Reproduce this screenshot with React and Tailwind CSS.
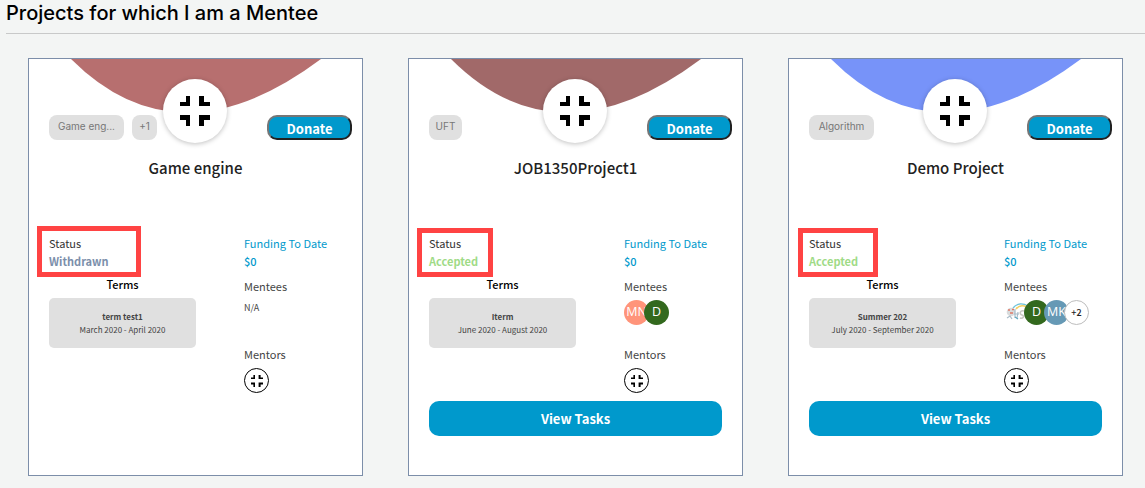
const projects = [
  {
    name: "Game engine",
    tags: [{ label: "Game eng...", width: "w-[75px]" }, { label: "+1", width: "w-[25px]" }],
    color: "#b76f6f",
    status: "Withdrawn",
    statusColor: "text-[#7c8fab]",
    term: "term test1",
    dates: "March 2020 - April 2020",
    mentees: [],
    tasks: false,
    outline: "left-[8px] top-[167px] h-[51px] w-[104px]",
  },
  {
    name: "JOB1350Project1",
    tags: [{ label: "UFT", width: "w-[33px]" }],
    color: "#a16969",
    status: "Accepted",
    statusColor: "text-[#9fdb87]",
    term: "Iterm",
    dates: "June 2020 - August 2020",
    mentees: ["MN", "D"],
    tasks: true,
    outline: "left-[8px] top-[169px] h-[49px] w-[76px]",
  },
  {
    name: "Demo Project",
    tags: [{ label: "Algorithm", width: "w-[65px]" }],
    color: "#7793f9",
    status: "Accepted",
    statusColor: "text-[#9fdb87]",
    term: "Summer 202",
    dates: "July 2020 - September 2020",
    mentees: ["photo", "D", "MK", "+2"],
    tasks: true,
    outline: "left-[9px] top-[169px] h-[49px] w-[80px]",
  },
];

const avatarStyles = {
  MN: "bg-[#ff947a] text-white",
  D: "bg-[#33691e] text-white",
  MK: "bg-[#6699b5] text-white",
};

function Corners({ className }) {
  return (
    <svg className={className} viewBox="0 0 30 30" fill="#000">
      <path d="M6 0h4v10H0V6h6z" />
      <path d="M19 0h5v6h6v4H19z" />
      <path d="M0 19h10v11H6v-6H0z" />
      <path d="M19 19h11v5h-6v6h-5z" />
    </svg>
  );
}

function PhotoAvatar() {
  return (
    <svg className="h-[25px] w-[25px] shrink-0" viewBox="0 0 25 25" fill="none">
      <path d="M9 8C13 3 19 3 24 6" stroke="#6fc4dc" strokeWidth="1.4" />
      <path d="M12 9c3-4 7-4 11-2" stroke="#f3cf62" strokeWidth="1.4" />
      <circle cx="7" cy="12" r="4.3" fill="#d9dcdd" />
      <path d="M4 10h2M8 9.500h2M6 13h3" stroke="#df7867" strokeWidth="1.3" />
      <path d="M3 18l3-2 2 3M11 9v9M14 12l-1 6M10 14h5" stroke="#a9bcc8" strokeWidth="1.2" />
      <path d="M20 11c-4-1-5 3-2 4s1 4-2 3" stroke="#c9c9c2" strokeWidth="1.6" />
      <path d="M11 17l3 2" stroke="#5ba7c0" strokeWidth="1.2" />
    </svg>
  );
}

function Avatar({ label }) {
  if (label === "photo") return <PhotoAvatar />;
  if (label.startsWith("+"))
    return (
      <span className="flex h-[25px] w-[25px] shrink-0 items-center justify-center rounded-full border border-[#bdbdbd] bg-white text-[9px] font-medium text-[#222]">
        {label}
      </span>
    );
  return (
    <span
      className={`flex h-[25px] w-[25px] shrink-0 items-center justify-center overflow-hidden rounded-full font-['Open_Sans',sans-serif] text-[12.5px] ${avatarStyles[label]}`}
    >
      {label}
    </span>
  );
}

function ProjectCard({ project }) {
  return (
    <article className="relative h-[418px] w-[335px] shrink-0 border border-[#7c8ea9] bg-white">
      <svg className="absolute left-0 top-0 h-[60px] w-[333px]" viewBox="0 0 333 60">
        <path d="M42 0Q149 107 292 0Z" fill={project.color} />
      </svg>

      <div className="relative flex h-[84px] items-end pl-5 pr-[10px]">
        <div className="mb-[3px] flex w-[114px] gap-2">
          {project.tags.map((tag) => (
            <span
              key={tag.label}
              className={`flex h-[25px] items-center justify-center whitespace-nowrap rounded-lg bg-[#e0e0e0] pb-[2px] font-[Inter,sans-serif] text-[10px] text-[#777] ${tag.width}`}
            >
              {tag.label}
            </span>
          ))}
        </div>
        <div className="flex h-16 w-16 items-center justify-center rounded-full bg-white shadow-[0_1px_5px_rgba(0,0,0,0.25)]">
          <Corners className="h-[30px] w-[30px]" />
        </div>
        <button className="mb-[3px] ml-auto flex h-[25px] w-[85px] items-center justify-center rounded-[10px] border-2 border-b-[#212121] border-l-[#767676] border-r-[#212121] border-t-[#767676] bg-[#0099cc] pt-[2px] text-[13px] font-bold leading-none text-white">
          Donate
        </button>
      </div>

      <h2 className="mt-[14px] text-center text-[15px] font-medium leading-[22px] text-[#222]">{project.name}</h2>

      <div className="mt-[55px] flex h-[167px] pl-5">
        <div className="w-[147px]">
          <div className="h-[18px] text-[11px] leading-[18px] text-[#333]">Status</div>
          <div className={`h-[18px] text-[11px] font-bold leading-[18px] ${project.statusColor}`}>{project.status}</div>
          <div className="mt-[5px] h-[18px] text-center text-[11px] font-medium leading-[18px] text-black">Terms</div>
          <div className="mt-[5px] flex h-[50px] flex-col items-center rounded-[5px] bg-[#e0e0e0] pt-3 text-[8px] leading-[13px] text-[#444]">
            <div className="font-bold">{project.term}</div>
            <div>{project.dates}</div>
          </div>
        </div>
        <div className="ml-12">
          <div className="h-[18px] text-[11px] leading-[18px] text-[#0099cc]">Funding To Date</div>
          <div className="h-[18px] text-[11px] font-medium leading-[18px] text-[#0099cc]">$0</div>
          <div className="mt-[7px] h-[18px] text-[11px] leading-[18px] text-[#444]">Mentees</div>
          <div className="mt-[5px] flex h-[25px] -space-x-[5px]">
            {project.mentees.length === 0 && <span className="text-[9px] leading-4 text-[#444]">N/A</span>}
            {project.mentees.map((label) => (
              <Avatar key={label} label={label} />
            ))}
          </div>
          <div className="mt-5 h-[18px] text-[11px] leading-[18px] text-[#444]">Mentors</div>
          <div className="mt-[5px] flex h-[25px] w-[25px] items-center justify-center rounded-full border border-black">
            <Corners className="h-3 w-3" />
          </div>
        </div>
      </div>

      {project.tasks && (
        <button className="ml-5 flex h-[35px] w-[293px] items-center justify-center rounded-[10px] bg-[#0099cc] text-[13px] font-bold leading-none text-white">
          View Tasks
        </button>
      )}

      <div className={`absolute border-[5px] border-[#ff4343] ${project.outline}`} />
    </article>
  );
}

export default function App() {
  return (
    <main className="h-[488px] w-[1145px] overflow-hidden bg-[#f3f5f4] font-['Noto_Sans_CJK_SC','Noto_Sans',sans-serif]">
      <h1 className="ml-[6px] h-[34px] border-b border-[#c8c9c9] font-[Inter,sans-serif] text-[20px] font-medium leading-[26px] text-black">
        Projects for which I am a Mentee
      </h1>
      <section className="flex gap-[45px] pl-7 pt-6">
        {projects.map((project) => (
          <ProjectCard key={project.name} project={project} />
        ))}
      </section>
    </main>
  );
}
